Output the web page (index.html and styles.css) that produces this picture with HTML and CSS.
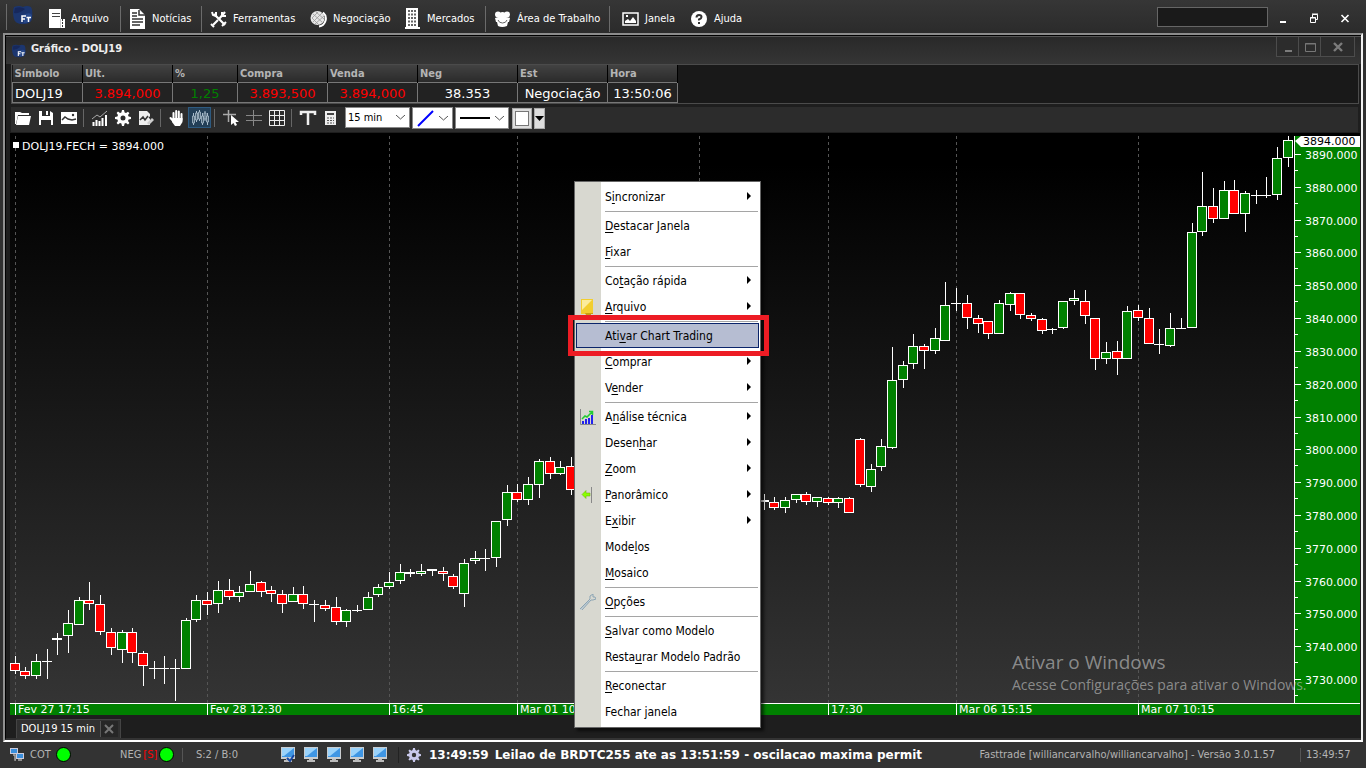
FILE: index.html
```html
<!DOCTYPE html>
<html lang="pt-BR">
<head>
<meta charset="utf-8">
<title>Fasttrade</title>
<link rel="stylesheet" href="styles.css">
</head>
<body>
<svg class="defs" aria-hidden="true">
  <symbol id="logo" viewBox="0 0 20 20">
    <path d="M1 2Q6 0 10 2Q14 0 18 2Q20 5 19 14Q18 19 10 19Q2 19 1 14Q-1 7 1 2Z" fill="#1c366f"/>
    <path d="M2 3Q8 1 12 4Q6 9 1 8Z" fill="#17285b"/><path d="M10 10Q18 6 19 11Q18 18 11 18Z" fill="#28498a"/>
    <path d="M9 17V11H13M9 14H12M13.500 12.500H18M15.500 12.500V17" fill="none" stroke="#fff" stroke-width="1.500"/>
  </symbol>
  <symbol id="monitor" viewBox="0 0 16 16">
    <path d="M1 0H15V12H1Z" fill="#c9cdd0"/><path d="M2 1H14V10H2Z" fill="#3f96e4"/><path d="M2 1H14L4 9H2Z" fill="#9ad2fa"/>
    <path d="M6 12H10V13H12V15H4V13H6Z" fill="#bbb"/>
  </symbol>
  <symbol id="gear" viewBox="0 0 16 16">
    <path fill-rule="evenodd" d="M7 0H9L9.600 2.400L11 3L13 1.700L14.400 3.200L13 5L13.600 6.400L16 7V9L13.600 9.600L13 11L14.400 13L13 14.400L11 13L9.600 13.600L9 16H7L6.400 13.600L5 13L3 14.400L1.600 13L3 11L2.400 9.600L0 9V7L2.400 6.400L3 5L1.600 3L3 1.600L5 3L6.400 2.400ZM8 5.500A2.500 2.500 0 1 0 8 10.500A2.500 2.500 0 1 0 8 5.500Z"/>
  </symbol>
</svg>

<header class="topbar">
  <nav class="menubar">
    <span class="brand"><svg width="20" height="20"><use href="#logo"/></svg></span>
    <button class="menu-btn"><svg width="18" height="22" viewBox="0 0 18 22"><path d="M1 1H13V11H17V20H1Z" fill="#fff"/><path d="M4 5.500H12M4 8.500H12" stroke="#444"/><path d="M12.500 11V20" stroke="#ccc"/><path d="M14.500 11V20" stroke="#333" stroke-dasharray="2 1"/></svg>Arquivo</button>
    <button class="menu-btn sep"><svg width="18" height="22" viewBox="0 0 18 22"><path d="M1 1H10L16 7V21H1Z" fill="#fff"/><path d="M10 2V7H16M3 5H8M3 8H8M3 11H14M3 14H14M3 17H11" stroke="#333" stroke-width="1.500" fill="none"/></svg>Notícias</button>
    <button class="menu-btn sep"><svg width="18" height="18" viewBox="0 0 18 18"><path d="M4 4L15 15M15 2L9 9M8 10L3 15" stroke="#fff" stroke-width="2.200" fill="none"/><path d="M2 2L3 5L6 6L6 2M16 6L12 6L12 2M1 14L4 17M12 16L16 12" stroke="#fff" stroke-width="2" fill="none"/></svg>Ferramentas</button>
    <button class="menu-btn"><svg width="18" height="18" viewBox="0 0 18 18"><circle cx="7.500" cy="8" r="7" fill="#e6e6e6"/><path d="M3 4L12 12M6 2L14 9M2 8L9 15M3 12L12 3M5 14L14 6M2 8L8 2" stroke="#999" stroke-width=".8" fill="none"/><path d="M9 16.500A8 8 0 0 0 13 2.500" stroke="#fff" stroke-width="2" fill="none"/></svg>Negociação</button>
    <button class="menu-btn"><svg width="18" height="22" viewBox="0 0 18 22"><path d="M2 0H14V19H16V21H1V19H2Z" fill="#fff"/><path d="M5 2V19M8 2V19M11 2V19" stroke="#333" stroke-width="1.500" stroke-dasharray="2 1.500"/></svg>Mercados</button>
    <button class="menu-btn sep"><svg width="18" height="18" viewBox="0 0 18 18"><g fill="#fff"><circle cx="4" cy="4.500" r="3"/><circle cx="8.500" cy="5" r="3"/><circle cx="13" cy="4.500" r="3"/><path d="M1 8Q8 5 16 8L15 12H2Z"/><path d="M3 12H14L13 16Q8 18 4 16Z"/></g><path d="M4 10Q5 13 8.500 13Q12 13 13 10" fill="none" stroke="#666"/></svg>Área de Trabalho</button>
    <button class="menu-btn sep janela"><svg width="18" height="18" viewBox="0 0 18 18"><rect x="1" y="3" width="15" height="12" fill="none" stroke="#fff" stroke-width="1.500"/><path d="M3 13V11L6 9L8 11L11 7L14 11V13Z" fill="#fff"/><rect x="4" y="5" width="2" height="2" fill="#fff"/></svg>Janela</button>
    <button class="menu-btn"><svg width="18" height="18" viewBox="0 0 18 18"><circle cx="8" cy="9" r="8" fill="#fff"/><path d="M5.500 7.500Q5.500 5 8 5T10.500 7Q10.500 8.500 8 9.500V10.500M8 12V14" fill="none" stroke="#333" stroke-width="2"/></svg>Ajuda</button>
  </nav>
  <input class="search" type="text" aria-label="Pesquisar">
  <div class="sys">
    <button aria-label="Minimizar"><svg width="10" height="12"><path d="M2 10H8" stroke="#fff" stroke-width="2"/></svg></button>
    <button aria-label="Restaurar"><svg width="10" height="12"><path d="M3.500 5V2.500H8.500V7.500H7M3 2H9" fill="none" stroke="#fff"/><path d="M1.500 5.500H6.500V10.500H1.500ZM1 6H7" fill="none" stroke="#fff"/></svg></button>
    <button aria-label="Fechar"><svg width="10" height="12"><path d="M1.500 3L8.500 10M8.500 3L1.500 10" stroke="#fff" stroke-width="1.600"/></svg></button>
  </div>
</header>

<main class="frame">
  <div class="inner">
    <div class="titlebar">
      <svg width="14" height="14"><use href="#logo"/></svg>
      <h1>Gráfico - DOLJ19</h1>
      <div class="win-btns">
        <button aria-label="Minimizar gráfico"><svg width="10" height="12"><path d="M2 10H9" stroke="#7c7c7c" stroke-width="2"/></svg></button>
        <button aria-label="Maximizar gráfico"><svg width="12" height="12"><path d="M1.500 2.500H11.500V10.500H1.500ZM1 3H12" fill="none" stroke="#777"/></svg></button>
        <button class="wide" aria-label="Fechar gráfico"><svg width="12" height="12"><path d="M2 2L10 10M10 2L2 10" stroke="#7c7c7c" stroke-width="2.400"/></svg></button>
      </div>
    </div>

    <div class="quote-panel">
      <table class="quote">
        <colgroup><col class="w70"><col class="w90"><col class="w65"><col class="w90"><col class="w90"><col class="w100"><col class="w90"><col class="w70"></colgroup>
        <thead><tr><th>Símbolo</th><th>Ult.</th><th>%</th><th>Compra</th><th>Venda</th><th>Neg</th><th>Est</th><th>Hora</th></tr></thead>
        <tbody><tr><td class="left">DOLJ19</td><td class="down">3.894,000</td><td class="up">1,25</td><td class="down">3.893,500</td><td class="down">3.894,000</td><td>38.353</td><td>Negociação</td><td>13:50:06</td></tr></tbody>
      </table>
    </div>

    <div class="toolbar">
      <button class="tool" aria-label="Abrir"><svg width="18" height="18" viewBox="0 0 18 18"><path d="M1 15V3H6L8 4H15V6H4L2 15Z" fill="#fff"/><path d="M4 7H17L15 16H2Z" fill="#fff"/></svg></button>
      <button class="tool" aria-label="Salvar"><svg width="18" height="18" viewBox="0 0 18 18"><path d="M2 2H5V7H13V2L16 4V16H14V10H4V16H2Z" fill="#fff"/><path d="M4 10H14M10 2V6" stroke="#fff" stroke-width="2"/></svg></button>
      <button class="tool" aria-label="Imagem"><svg width="18" height="18" viewBox="0 0 18 18"><path d="M1 3H17V15H1Z" fill="#fff"/><path d="M2 11L5 8L8 10L12 11L16 10" fill="none" stroke="#333" stroke-width="1.500"/><circle cx="13" cy="6" r="1.200" fill="#333"/></svg></button>
      <span class="divider"></span>
      <button class="tool" aria-label="Indicadores"><svg width="18" height="18" viewBox="0 0 18 18"><path d="M2.500 17V13M5.500 17V11M8.500 17V12M11.500 17V9M15 17V6" stroke="#fff" stroke-width="2"/><path d="M1 10L6 6L9 8L16 2" fill="none" stroke="#aaa"/></svg></button>
      <button class="tool" aria-label="Configurar"><svg width="16" height="16" fill="#fff"><use href="#gear"/></svg></button>
      <button class="tool" aria-label="Editar estudo"><svg width="18" height="18" viewBox="0 0 18 18"><path d="M2 2H10L13 5V16H2Z" fill="#eee"/><path d="M3 11L6 8L8 11L11 7M12 8L16 12" fill="none" stroke="#333" stroke-width="1.500"/><path d="M10 14L15 9L17 11L12 16Z" fill="#ccc"/></svg></button>
      <span class="divider"></span>
      <button class="tool" aria-label="Mover"><svg width="18" height="18" viewBox="0 0 18 18"><path d="M5.500 11V4M8.200 10V2M10.800 10V2.500M13.500 11V5M6 13L2.500 9" stroke="#fff" stroke-width="2" stroke-linecap="round"/><path d="M4.500 9H14.500V13L12 17H7L4 13Z" fill="#fff"/></svg></button>
      <button class="tool active" aria-label="Candles"><svg width="18" height="18" viewBox="0 0 18 18"><path d="M2.500 4V16M5.500 2V13M8.500 1V12M11.500 4V16M14 2V12M16.500 4V16" stroke="#a9bccb"/><path d="M1.500 7H3.500V14H1.500ZM4.500 4H6.500V11H4.500ZM7.500 3H9.500V10H7.500ZM10.500 7H12.500V14H10.500ZM13 4H15V10H13ZM15.500 7H17.500V13H15.500Z" fill="#4a6274" stroke="#a9bccb" stroke-width=".8"/></svg></button>
      <span class="divider"></span>
      <button class="tool" aria-label="Cursor"><svg width="18" height="18" viewBox="0 0 18 18"><path d="M1 5.500H14M6.500 1V13" stroke="#aaa" stroke-width="1.500"/><path d="M9 6V16L11.500 14L13 17L15 16L13.500 13H17Z" fill="#fff"/></svg></button>
      <button class="tool" aria-label="Cruz"><svg width="18" height="18" viewBox="0 0 18 18"><path d="M1 6.500H17M1 11.500H17M8.500 1V17" stroke="#888"/></svg></button>
      <button class="tool" aria-label="Grade"><svg width="18" height="18" viewBox="0 0 18 18"><path d="M1.500 1.500H16.500V16.500H1.500ZM6.500 1V17M11.500 1V17M1 6.500H17M1 11.500H17" fill="none" stroke="#eee"/></svg></button>
      <span class="divider"></span>
      <button class="tool" aria-label="Texto"><svg width="18" height="18" viewBox="0 0 18 18"><path d="M2 6V3H16V6M9 3V16" fill="none" stroke="#eee" stroke-width="2.500"/></svg></button>
      <button class="tool" aria-label="Calculadora"><svg width="18" height="18" viewBox="0 0 18 18"><path d="M3 2H14V16H3Z" fill="#eee"/><path d="M5 5H12" stroke="#444" stroke-width="2"/><path d="M5 9H12M5 11.500H12M5 14H12" stroke="#555" stroke-dasharray="2 1"/></svg></button>
      <label class="pick interval"><select aria-label="Intervalo"><option>15 min</option></select><svg width="9" height="5"><path d="M0 0L4.500 4L9 0" fill="none" stroke="#555"/></svg></label>
      <button class="pick pen" aria-label="Ferramenta de linha"><svg width="18" height="18"><path d="M1 17L16 2" stroke="#00f" stroke-width="2"/></svg><svg width="9" height="5"><path d="M0 0L4.500 4L9 0" fill="none" stroke="#555"/></svg></button>
      <button class="pick stroke" aria-label="Espessura"><svg width="30" height="4"><path d="M0 2H30" stroke="#000" stroke-width="2"/></svg><svg width="9" height="5"><path d="M0 0L4.500 4L9 0" fill="none" stroke="#555"/></svg></button>
      <button class="swatch" aria-label="Cor"><span></span></button>
      <button class="drop" aria-label="Escolher cor"><svg width="9" height="5"><path d="M0 0H9L4.500 5Z"/></svg></button>
    </div>

    <svg class="chart" id="chart" viewBox="10 133 1350 582" preserveAspectRatio="xMinYMin meet" role="img" aria-label="DOLJ19 15 min"></svg>

    <div class="tabs">
      <div class="tab"><span>DOLJ19 15 min</span><button aria-label="Fechar aba"><svg width="12" height="12"><path d="M2 2L10 10M10 2L2 10" stroke="#777" stroke-width="2"/></svg></button></div>
    </div>
  </div>
</main>

<footer class="status">
  <span class="net"><svg width="15" height="15" viewBox="0 0 15 15"><path d="M0 1H8V7H0ZM6 6H14V12H6Z" fill="#ccd"/><path d="M1 2H7V6H1ZM7 7H13V11H7Z" fill="#3b8fdc"/><path d="M3 8H5V13H6M8 13H12" stroke="#aaa" fill="none" stroke-width="1.500"/></svg></span>
  <span class="cot">COT <i class="led"></i></span>
  <span class="neg">NEG <b>[S]</b><i class="led"></i></span>
  <span class="sb">S:2 / B:0</span>
  <span class="screens">
    <svg width="16" height="16"><use href="#monitor"/><path d="M7 11L10 14L14 8" fill="none" stroke="#1746a0" stroke-width="2"/></svg>
    <svg width="16" height="16"><use href="#monitor"/></svg>
    <svg width="16" height="16"><use href="#monitor"/></svg>
    <svg width="16" height="16"><use href="#monitor"/></svg>
    <svg width="16" height="16"><use href="#monitor"/></svg>
  </span>
  <span class="news"><svg width="14" height="14" fill="#c9c9ec"><use href="#gear"/></svg><strong><time>13:49:59</time>Leilao de BRDTC255 ate as 13:51:59 - oscilacao maxima permit</strong></span>
  <span class="version">Fasttrade [williancarvalho/williancarvalho] - Versão 3.0.1.57</span>
  <span class="clock">13:49:57</span>
</footer>

<aside class="watermark"><p class="wm-title">Ativar o Windows</p><p class="wm-text">Acesse Configurações para ativar o Windows.</p></aside>

<div class="popup" role="menu">
  <button class="item more" role="menuitem"><span>S<u>i</u>ncronizar</span></button>
  <hr>
  <button class="item" role="menuitem"><span><u>D</u>estacar Janela</span></button>
  <button class="item" role="menuitem"><span><u>F</u>ixar</span></button>
  <hr>
  <button class="item more" role="menuitem"><span>Co<u>t</u>ação rápida</span></button>
  <button class="item more" role="menuitem"><svg width="16" height="16"><path d="M1 0H13V15H1Z" fill="#f2ce2e"/><path d="M2 1H12L2 11Z" fill="#fbec9c"/><path d="M1 14H5L6 16H11V15H13V14" fill="#c99f13"/></svg><span><u>A</u>rquivo</span></button>
  <hr>
  <button class="item selected" role="menuitem"><span>Ati<u>v</u>ar Chart Trading</span></button>
  <button class="item more" role="menuitem"><span><u>C</u>omprar</span></button>
  <button class="item more" role="menuitem"><span>V<u>e</u>nder</span></button>
  <hr>
  <button class="item more" role="menuitem"><svg width="16" height="16"><path d="M.5 0V15.500H16" fill="none" stroke="#888"/><path d="M3 15V12M6 15V10M9 15V9M12 15V6" stroke="#22e" stroke-width="2"/><path d="M2 10L5 7L7 8L12 3M9 2.500H12.500V6" fill="none" stroke="#2c3" stroke-width="1.500"/></svg><span>A<u>n</u>álise técnica</span></button>
  <button class="item more" role="menuitem"><span>Desen<u>h</u>ar</span></button>
  <button class="item more" role="menuitem"><span><u>Z</u>oom</span></button>
  <button class="item more" role="menuitem"><svg width="16" height="16"><path d="M2 7.500L6 3.500V6H10V9H6V11.500Z" fill="#8f0" stroke="#6a0" stroke-width=".5"/><path d="M11.500 0V16" stroke="#888"/></svg><span><u>P</u>anorâmico</span></button>
  <button class="item more" role="menuitem"><span>E<u>x</u>ibir</span></button>
  <button class="item" role="menuitem"><span>Mode<u>l</u>os</span></button>
  <button class="item" role="menuitem"><span><u>M</u>osaico</span></button>
  <hr>
  <button class="item" role="menuitem"><svg width="16" height="16"><path d="M0 15L9 6L10 7L1 16Z" fill="#b9c8d0"/><path d="M0 15L10 5V2L13 0V3H15L16 5L13 6H11L2 16" fill="none" stroke="#8ba4b4"/></svg><span><u>O</u>pções</span></button>
  <hr>
  <button class="item" role="menuitem"><span><u>S</u>alvar como Modelo</span></button>
  <button class="item" role="menuitem"><span>Resta<u>u</u>rar Modelo Padrão</span></button>
  <hr>
  <button class="item" role="menuitem"><span><u>R</u>econectar</span></button>
  <button class="item" role="menuitem"><span>Fechar janela</span></button>
</div>
<script src="chart.js"></script>
</body>
</html>
```
FILE: styles.css
```css
* { box-sizing: border-box; }
body {
  margin: 0;
  min-height: 100vh;
  display: flex;
  flex-direction: column;
  position: relative;
  overflow: hidden;
  background: #303030;
  color: #fff;
  font: 11px/14px "DejaVu Sans Condensed", "DejaVu Sans", sans-serif;
}
button { border: 0; padding: 0; background: none; color: inherit; font: inherit; }
svg { display: block; flex: none; }
.defs { position: absolute; width: 0; height: 0; }

.topbar { height: 33px; display: flex; align-items: center; background: linear-gradient(#363636, #2b2b2b); }
.menubar {
  height: 33px;
  display: grid;
  grid-template-columns: 38px 76px 81px 105px 94px 85px 124px 78px 60px;
  padding-left: 6px;
  flex: 1;
  align-items: center;
}
.brand { height: 26px; padding: 1px 0 0 6px; border-left: 1px solid #6b6b6b; }
.menu-btn { height: 26px; margin-top: 4px; padding-left: 4px; display: flex; align-items: center; gap: 5px; white-space: nowrap; }
.menu-btn.sep { border-left: 1px solid #6b6b6b; padding-left: 8px; }
.menu-btn.janela { padding-left: 12px; }
.search { width: 111px; height: 20px; border: 1px solid #666; background: #1a1a1a; color: #fff; }
.sys { display: flex; gap: 21px; padding: 2px 16px 0 10px; }

.frame {
  flex: 1;
  display: flex;
  margin: 0 3px;
  border: 2px solid;
  border-color: #8c8c8c #f2f2f2 #fff #909090;
}
.inner {
  flex: 1;
  min-width: 0;
  display: flex;
  flex-direction: column;
  border-top: 1px solid #000;
  border-left: 1px solid #000;
  border-bottom: 2px solid #333;
  background: #1e1e1e;
}
.titlebar {
  height: 28px;
  display: flex;
  align-items: center;
  gap: 5px;
  padding: 0 6px;
  border-top: 1px solid #555;
  background: linear-gradient(#292929, #353535);
}
.titlebar h1 { flex: 1; margin: 0; padding-bottom: 3px; font-size: 11px; color: #eee; }
.win-btns { align-self: flex-start; display: flex; border: 1px solid #4c4c4c; border-top: 0; }
.win-btns button { width: 22px; height: 19px; display: grid; place-items: center; border-right: 1px solid #4c4c4c; background: #2c2c2c; }
.win-btns .wide { width: 33px; border: 0; }

.quote-panel { height: 40px; margin: 0 2px 0 5px; border: 1px solid #4b4b4b; background: #191919; }
.quote { width: 665px; table-layout: fixed; border-collapse: collapse; }
.w90 { width: 90px; } .w65 { width: 65px; } .w100 { width: 100px; } .w70 { width: 70px; }
.quote th { height: 17px; padding: 1px 2px 0; border-right: 1px solid #000; background: linear-gradient(#424242, #2a2a2a); color: #b4b4b4; text-align: left; line-height: 16px; }
.quote td { height: 20px; padding: 1px 0 0; border: 1px solid #777; background: #222; text-align: center; font: 13px/17px "DejaVu Sans", sans-serif; }
.quote .left { text-align: left; padding-left: 2px; }
.quote .down { color: #f00; }
.quote .up { color: #008000; }

.toolbar { height: 25px; margin: 3px 3px 1px 5px; display: flex; align-items: flex-start; background: #2c2c2c; }
.tool { width: 23px; height: 21px; display: grid; place-items: center; }
.tool.active { background: #233f57; border: 1px solid #2d5a80; }
.divider { width: 8px; height: 18px; margin-top: 2px; background: linear-gradient(#666, #666) 3px 0 / 1px 100% no-repeat; }
.pick { height: 22px; display: flex; align-items: center; justify-content: space-between; padding: 0 4px; border: 1px solid #888; background: #fff; color: #000; }
.interval { width: 65px; height: 21px; margin-left: 3px; padding-left: 2px; }
.interval select { flex: 1; min-width: 0; border: 0; padding: 0; appearance: none; background: #fff; font: inherit; }
.pen { width: 41px; margin-left: 2px; }
.stroke { width: 54px; margin-left: 2px; }
.swatch { width: 20px; height: 21px; margin: 1px 2px 0 3px; display: grid; place-items: center; border: 1px solid #aaa; background: #ddd; }
.swatch span { width: 14px; height: 15px; border: 1px solid #777; background: #fff; }
.drop { width: 11px; height: 21px; margin-top: 1px; display: grid; place-items: center; border: 1px solid #aaa; background: #ddd; }

.chart { flex: 1 1 0; min-height: 0; margin: 0 1px 0 4px; overflow: visible; background: #000; }
.chart text { font: 11px "DejaVu Sans", sans-serif; fill: #fff; }
.chart .dark { fill: #000; }
.chart .grid { stroke: #555; stroke-dasharray: 3 3; }

.tabs { height: 23px; padding: 4px 0 0 10px; display: flex; }
.tab { display: flex; align-items: center; gap: 5px; padding: 0 2px 0 4px; border: 1px solid #444; border-bottom: 0; background: #303030; }
.tab button { width: 18px; height: 16px; display: grid; place-items: center; border-left: 1px solid #555; background: #262626; }

.status { height: 26px; display: grid; grid-template-columns: 20px 90px 62px 98px 119px 1fr auto 66px; align-items: center; padding: 0 0 1px 10px; background: #333; color: #b4b4b4; }
.cot, .neg, .news { display: flex; align-items: center; gap: 5px; }
.neg { gap: 2px; }
.neg b { color: #f00; font-weight: normal; }
.led { width: 15px; height: 15px; border: 1px solid #000; border-radius: 50%; background: #0f0; }
.sb { border-left: 1px solid #555; padding-left: 13px; }
.screens { display: flex; gap: 7px; border-right: 1px solid #222; }
.news { padding-left: 8px; gap: 8px; white-space: nowrap; color: #fff; font: 12px/14px "DejaVu Sans", sans-serif; }
.news time { margin-right: 6px; }
.version { padding-right: 25px; }
.clock { padding-left: 5px; border-left: 1px solid #555; }

.watermark { position: absolute; right: 54px; bottom: 73px; width: 300px; color: rgba(190, 190, 190, .65); font-family: "Open Sans", sans-serif; white-space: nowrap; pointer-events: none; }
.watermark p { margin: 0; }
.wm-title { font-size: 19px; line-height: 26px; }
.wm-text { font-size: 14px; line-height: 20px; }

.popup {
  position: absolute;
  left: 574px;
  top: 181px;
  width: 187px;
  padding: 2px 0;
  border: 1px solid #666;
  background: linear-gradient(90deg, #d8d8d0 26px, #fff 26px);
  box-shadow: 3px 3px 3px rgba(0, 0, 0, .6);
  color: #000;
  font-size: 12px;
}
.item { position: relative; width: 100%; height: 26px; display: grid; grid-template-columns: 25px 1fr; align-items: center; padding-left: 5px; text-align: left; }
.item span { grid-column: 2; }
.item svg { grid-column: 1; grid-row: 1; }
.item u { text-underline-offset: 2px; }
.item.more::after { content: ""; position: absolute; right: 9px; top: 8px; border: 4px solid transparent; border-left-color: #000; border-right: 0; }
.popup hr { height: 1px; margin: 1px 2px 1px 30px; border: 0; background: #a5a5a5; }
.selected::before { content: ""; position: absolute; inset: 0 1px 1px; border: 1px solid #0a246a; background: #b6bdd2; }
.selected::after { content: ""; position: absolute; inset: -8px -9px -7px -7px; z-index: 2; border: 5px solid #ed1c24; }
.selected span { position: relative; }
```
FILE: chart.js
```javascript
const NS = "http://www.w3.org/2000/svg";
const chart = document.getElementById("chart");

function add(tag, attrs, text) {
  const el = document.createElementNS(NS, tag);
  for (const key in attrs) el.setAttribute(key, attrs[key]);
  if (text) el.textContent = text;
  chart.appendChild(el);
  return el;
}

// x, high, body top, body bottom, low, direction (1 up, 0 down)
const candles = [
  [15,656,663,671,674,0],[25,667,671,676,679,0],[36,654,661,676,679,1],[47,649,661,662,679,1],[57,633,638,640,655,1],
  [68,610,623,636,653,1],[79,597,600,625,625,1],[89,582,600,604,610,0],[100,595,604,632,635,0],[111,628,632,648,655,0],
  [122,630,632,650,663,1],[132,628,632,653,663,0],[143,651,653,666,686,0],[154,661,668,669,679,1],[164,656,668,669,684,1],
  [175,659,668,669,701,1],[186,618,620,669,669,1],[196,595,600,620,622,1],[207,592,600,605,615,0],[218,581,590,604,613,1],
  [229,579,590,597,600,0],[239,586,592,597,602,1],[250,571,584,592,592,1],[261,581,582,592,597,0],[271,586,590,594,602,0],
  [282,590,594,604,613,0],[293,587,594,602,602,1],[303,586,594,604,609,0],[314,600,604,605,622,1],[325,600,605,609,611,0],
  [336,597,607,622,625,0],[346,609,610,622,627,1],[357,605,610,611,612,1],[368,592,597,610,610,1],[378,584,587,595,597,1],
  [389,572,582,587,589,1],[400,564,572,581,584,1],[410,569,572,574,577,1],[421,564,571,574,576,1],[432,569,569,571,576,1],
  [443,567,571,574,581,0],[453,574,576,587,589,0],[464,559,563,594,607,1],[475,551,558,561,564,1],[485,549,558,559,571,1],
  [496,521,521,558,567,1],[507,485,492,520,526,1],[517,484,492,500,502,0],[528,477,484,500,505,1],[539,459,461,485,498,1],
  [550,457,461,474,479,0],[560,461,467,474,475,1],[571,457,466,490,495,0],
  [764,494,500,502,510,1],[774,497,502,508,510,0],[785,497,500,508,513,1],[796,494,494,500,503,1],[806,492,494,502,505,0],
  [817,497,497,502,507,1],[828,497,498,503,505,0],[838,497,498,503,508,1],[849,497,498,513,513,0],[860,438,439,485,487,0],
  [871,464,469,487,492,1],[881,439,446,467,471,1],[892,347,380,448,449,1],[903,361,365,380,388,1],[913,334,346,364,369,1],
  [924,344,346,351,369,0],[935,328,338,351,354,1],[945,282,305,341,341,1],[956,288,303,304,311,1],[967,295,303,318,329,0],
  [978,315,318,324,333,0],[988,321,321,334,339,0],[999,300,303,334,334,1],[1010,292,293,305,311,1],[1020,293,293,315,319,0],
  [1031,313,315,319,321,0],[1042,318,319,331,334,0],[1052,328,329,330,334,1],[1063,301,301,328,329,1],[1074,290,298,301,305,1],
  [1085,290,301,316,324,0],[1095,318,318,359,370,0],[1106,342,352,359,364,1],[1117,341,351,359,375,0],[1127,306,311,359,359,1],
  [1138,305,310,318,321,0],[1149,308,318,344,344,0],[1159,329,344,345,354,1],[1170,313,328,346,347,1],[1181,318,328,329,329,1],
  [1192,223,232,328,328,1],[1202,172,206,232,236,1],[1213,188,206,219,223,0],[1224,181,190,219,219,1],[1234,180,190,214,214,0],
  [1245,191,193,214,232,1],[1256,190,195,196,204,1],[1266,177,195,196,198,1],[1277,147,158,195,200,1],[1288,136,140,158,167,1]
];
const times = [[15, "Fev 27 17:15"], [207, "Fev 28 12:30"], [389, "16:45"], [517, "Mar 01 10:15"], [699, ""], [828, "17:30"], [956, "Mar 06 15:15"], [1138, "Mar 07 10:15"]];

const defs = add("defs", {});
defs.innerHTML = '<linearGradient id="sky" x2="0" y2="1"><stop offset="0.05" stop-color="#000"/><stop offset="1" stop-color="#343434"/></linearGradient>';
add("rect", { x: 10, y: 136, width: 1284, height: 567, fill: "url(#sky)" });

for (const [x] of times) add("path", { d: `M${x + 0.5} 136V703`, class: "grid" });

for (const [x, high, top, bottom, low, up] of candles) {
  add("rect", { x, y: high, width: 1, height: low - high, fill: "#fff" });
  add("rect", { x: x - 5, y: top, width: 10, height: bottom - top, fill: "#fff" });
  if (bottom - top > 2) add("rect", { x: x - 4, y: top + 1, width: 8, height: bottom - top - 2, fill: up ? "#008000" : "#f00" });
}

// price axis
add("rect", { x: 1294, y: 136, width: 66, height: 567, fill: "#008000" });
add("rect", { x: 1294, y: 136, width: 1, height: 567, fill: "#fff" });
for (let i = 0; i <= 16; i++) {
  const y = Math.round(154 + i * 32.82);
  add("rect", { x: 1295, y, width: 6, height: 1, fill: "#fff" });
  add("rect", { x: 1295, y: y + 16, width: 3, height: 1, fill: "#fff" });
  add("text", { x: 1305, y: y + 5 }, (3890 - i * 10) + ".000");
}
add("path", { d: "M1295 141L1301 136H1360V147H1301Z", fill: "#fff" });
add("text", { x: 1303, y: 145, class: "dark" }, "3894.000");

// time axis
add("rect", { x: 10, y: 703, width: 1350, height: 12, fill: "#008000" });
add("rect", { x: 10, y: 703, width: 1350, height: 1, fill: "#fff" });
for (const [x, label] of times) {
  add("rect", { x, y: 704, width: 1, height: 11, fill: "#fff" });
  if (label) add("text", { x: x + 3, y: 713 }, label);
}

add("rect", { x: 13, y: 142, width: 6, height: 6, fill: "#fff" });
add("text", { x: 22, y: 150 }, "DOLJ19.FECH = 3894.000");
```
